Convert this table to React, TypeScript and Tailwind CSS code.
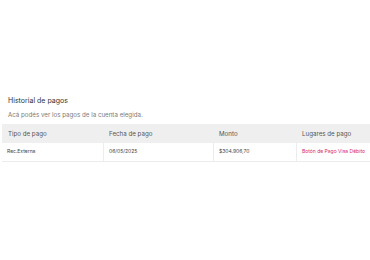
export default function App() {
  const cols = [
    { h: "Tipo de pago", v: "Rec.Externa", w: "w-[101px]" },
    { h: "Fecha de pago", v: "06/05/2025", w: "w-[110px]" },
    { h: "Monto", v: "$304.906,70", w: "w-[83px]" },
    { h: "Lugares de pago", v: "Botón de Pago Visa Débito", w: "w-[90px]" },
  ];
  return (
    <div className="w-[370px] h-[260px] bg-white overflow-hidden" style={{ fontFamily: "Inter, 'Open Sans', sans-serif" }}>
      <div className="pt-[96px]">
        <div className="pl-[8px] text-[7px] leading-[10px] text-[#333333]">Historial de pagos</div>
        <div className="pl-[8px] mt-[4px] text-[6.2px] leading-[9px] text-[#7a7a7a]">Acá podés ver los pagos de la cuenta elegida.</div>
        <div className="ml-[2px] mt-[5px] w-[400px]">
          <div className="flex bg-[#efefef] h-[19px] items-center">
            {cols.map((c, i) => (
              <div key={i} className={`${c.w} pl-[6px] text-[6.2px] text-[#555555]`}>{c.h}</div>
            ))}
          </div>
          <div className="flex h-[19px] border-b border-[#ececec]">
            {cols.map((c, i) => (
              <div
                key={i}
                className={`${c.w} pl-[5px] flex items-center text-[5px] ${i > 0 ? "border-l border-[#ececec]" : ""} ${i === 3 ? "text-[#d6246e]" : "text-[#444444]"}`}
              >
                {c.v}
              </div>
            ))}
          </div>
        </div>
      </div>
    </div>
  );
}
